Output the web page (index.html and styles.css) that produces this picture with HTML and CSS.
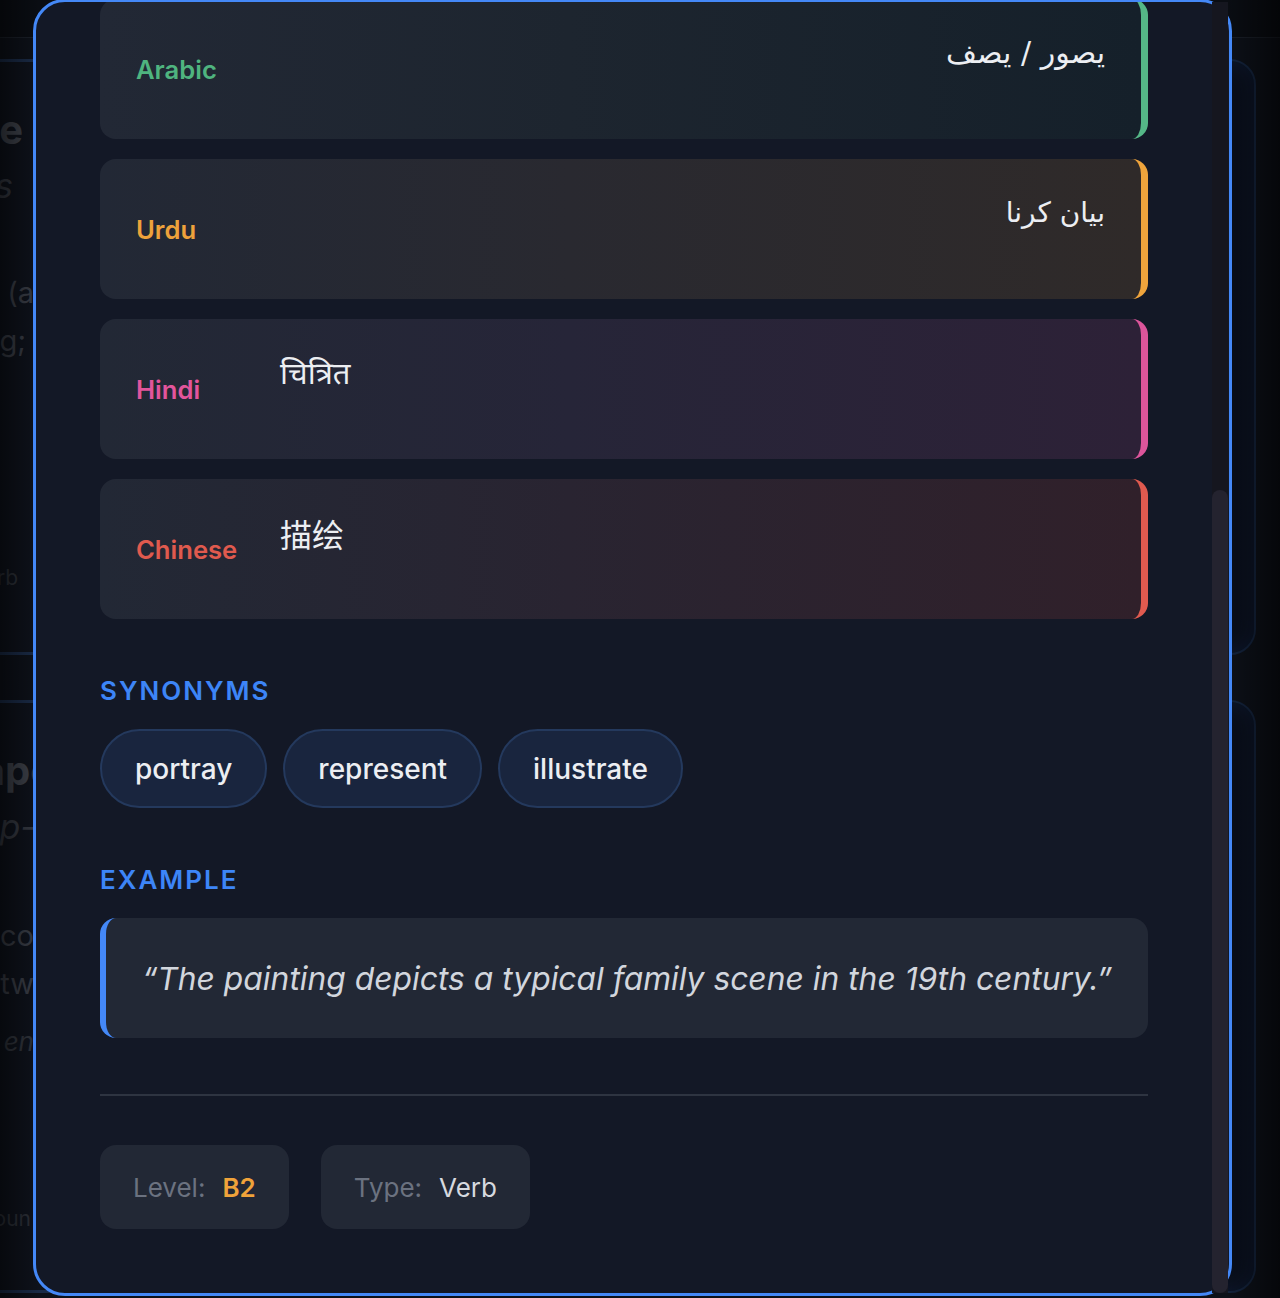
FILE: index.html
```html
<!DOCTYPE html>
<html lang="en">
<head>
<meta charset="utf-8">
<title>depict — word details</title>
<link rel="stylesheet" href="styles.css">
</head>
<body>
<div class="page">
  <header class="topbar"></header>
  <main class="grid">
    <article class="bgcard">
      <div class="bgtext">
        <div class="bg-title">Describe</div>
        <div class="bg-phon">/dɪˈskraɪbs</div>
        <div class="bg-def bg-def-first">To give an account in words of (a</div>
        <div class="bg-def bg-def-end">something;</div>
        <div class="bg-type">Verb</div>
      </div>
    </article>
    <article class="bgcard bgcard-right"></article>
    <article class="bgcard">
      <div class="bgtext">
        <div class="bg-title bg-title-2">Escape</div>
        <div class="bg-phon bg-phon-2">/ɪˈskɛp-</div>
        <div class="bg-def bg-def-first bg-def-2">A daring attempt to co</div>
        <div class="bg-def">break free between tw</div>
        <div class="bg-ex">“The prisoners’ daring escap en</div>
        <div class="bg-type bg-type-2">Noun</div>
      </div>
    </article>
    <article class="bgcard bgcard-right"></article>
  </main>
</div>
<div class="vignette"></div>

<div class="modal">
  <div class="scroll-view">
    <div class="modal-body">
      <section class="word-head">
        <h1 class="word-title">depict</h1>
        <div class="phonetic">/dɪˈpɪkt/</div>
        <p class="definition">To represent or show something in a picture or story; to describe someone or something in words, especially in a particular way.</p>
        <div class="tags"><span class="tag">verb</span><span class="tag">transitive</span></div>
      </section>

      <h2 class="section-title section-title-first">Translations</h2>
      <div class="tr-list">
        <div class="tr-card tr-es">
          <span class="tr-label">Spanish</span>
          <span class="tr-text">representar / describir</span>
        </div>
        <div class="tr-card tr-fr">
          <span class="tr-label">French</span>
          <span class="tr-text">dépeindre / représenter</span>
        </div>
        <div class="tr-card tr-ar">
          <span class="tr-label">Arabic</span>
          <span class="tr-text tr-rtl" dir="rtl" lang="ar">يصور / يصف</span>
        </div>
        <div class="tr-card tr-ur">
          <span class="tr-label">Urdu</span>
          <span class="tr-text tr-rtl tr-urdu" dir="rtl" lang="ur">بیان کرنا</span>
        </div>
        <div class="tr-card tr-hi">
          <span class="tr-label">Hindi</span>
          <span class="tr-text" lang="hi">चित्रित</span>
        </div>
        <div class="tr-card tr-zh">
          <span class="tr-label">Chinese</span>
          <span class="tr-text tr-cjk" lang="zh-CN">描绘</span>
        </div>
      </div>

      <h2 class="section-title">Synonyms</h2>
      <div class="chips">
        <span class="chip">portray</span>
        <span class="chip">represent</span>
        <span class="chip">illustrate</span>
      </div>

      <h2 class="section-title">Example</h2>
      <blockquote class="example">“The painting depicts a typical family scene in the 19th century.”</blockquote>

      <hr class="divider">

      <div class="meta">
        <div class="meta-item"><span class="meta-key">Level:</span><span class="meta-val meta-level">B2</span></div>
        <div class="meta-item"><span class="meta-key">Type:</span><span class="meta-val">Verb</span></div>
      </div>
    </div>
  </div>
  <div class="scrollbar"><div class="scrollbar-thumb"></div></div>
</div>
</body>
</html>
```

FILE: styles.css
```css
html, body {
  margin: 0;
  padding: 0;
}

body {
  width: 1280px;
  height: 1298px;
  overflow: hidden;
  background: #0d1119;
  font-family: "Inter", "DejaVu Sans", "Noto Sans", "Noto Sans CJK SC", sans-serif;
  position: relative;
}

/* ---------- background page (dimmed, behind the modal) ---------- */
.page {
  height: 1298px;
  overflow: hidden;
}

.topbar {
  height: 37px;
  background: #0a0d13;
  border-bottom: 1px solid #1a1f28;
}

.grid {
  display: grid;
  grid-template-columns: 1120px 612px;
  grid-template-rows: 596px 593px;
  column-gap: 24px;
  row-gap: 45px;
  margin-top: 21px;
  margin-left: -500px;
}

.bgcard {
  box-sizing: border-box;
  border: 3px solid #1a2b47;
  border-radius: 26px;
  background: #0e121b;
}

.bgcard-right {
  border-width: 2px;
  border-color: #14243e;
  background: #0a0f1b;
  box-shadow: inset 0 0 22px rgba(30, 70, 140, 0.22);
}

.bgtext {
  width: 531px;
  text-align: right;
  color: #363a43;
  white-space: nowrap;
}

.bg-title {
  font-size: 40px;
  line-height: 48px;
  font-weight: 700;
  color: #3c4049;
  margin-top: 44px;
  padding-right: 11px;
}

.bg-title-2 {
  padding-right: 0;
  margin-right: -20px;
}

.bg-phon {
  font-size: 34px;
  line-height: 40px;
  font-style: italic;
  margin-top: 12px;
  padding-right: 21px;
  color: #343841;
}

.bg-phon-2 {
  padding-right: 0;
  margin-right: -2px;
}

.bg-def {
  font-size: 29px;
  line-height: 48px;
  color: #383c45;
}

.bg-def-first {
  margin-top: 63px;
}

.bg-def-2 {
  margin-top: 65px;
}

.bg-def-end {
  padding-right: 8px;
}

.bg-ex {
  font-size: 26px;
  line-height: 36px;
  font-style: italic;
  margin-top: 16px;
  color: #30343c;
}

.bg-type {
  font-size: 21px;
  line-height: 28px;
  color: #2b2f37;
  margin-top: 199px;
  padding-right: 16px;
}

.bg-type-2 {
  margin-top: 145px;
  padding-right: 3px;
}

.vignette {
  position: absolute;
  inset: 0;
  pointer-events: none;
  background: linear-gradient(90deg,
    rgba(0, 0, 0, 0.5) 0,
    rgba(0, 0, 0, 0) 40px,
    rgba(0, 0, 0, 0) 1225px,
    rgba(0, 0, 0, 0.6) 1280px);
}

/* ---------- modal ---------- */
.modal {
  position: absolute;
  left: 33px;
  top: -1px;
  width: 1199px;
  height: 1297px;
  box-sizing: border-box;
  border: 3px solid #4488f7;
  border-radius: 32px;
  background: #131826;
}

.scroll-view {
  height: 100%;
  border-radius: 29px;
  overflow-y: auto;
  scrollbar-width: none;
  display: flex;
  flex-direction: column-reverse;
}

.scroll-view::-webkit-scrollbar {
  display: none;
}

/* drawn scrollbar, painted over the modal's right edge */
.scrollbar {
  position: absolute;
  top: 0;
  bottom: 0;
  right: 1px;
  width: 16px;
  background: #15161f;
  display: flex;
  flex-direction: column;
  justify-content: flex-end;
}

.scrollbar-thumb {
  height: 803px;
  border-radius: 8px;
  background: #24232f;
}

.modal-body {
  padding: 64px 81px 64px 64px;
  flex-shrink: 0;
}

/* scrolled-away header */
.word-head {
  margin: 0;
}

.word-title {
  margin: 0;
  font-size: 60px;
  line-height: 72px;
  font-weight: 700;
  color: #f3f4f6;
}

.phonetic {
  margin-top: 8px;
  font-size: 28px;
  line-height: 40px;
  font-style: italic;
  color: #9ca3af;
}

.definition {
  margin: 24px 0 0;
  font-size: 26px;
  line-height: 40px;
  color: #d1d5db;
  height: 80px;
  overflow: hidden;
}

.tags {
  margin-top: 24px;
  height: 40px;
  display: flex;
  gap: 12px;
}

.tag {
  display: flex;
  align-items: center;
  padding: 0 16px;
  border-radius: 20px;
  background: #1b2540;
  color: #93b4f5;
  font-size: 20px;
}

/* section headings */
.section-title {
  margin: 56px 0 22px;
  font-size: 26px;
  line-height: 32px;
  font-weight: 600;
  letter-spacing: 2px;
  text-transform: uppercase;
  color: #3d85f7;
}

.section-title-first {
  margin-bottom: 23px;
}

/* translation cards */
.tr-list {
  display: flex;
  flex-direction: column;
  gap: 20px;
}

.tr-card {
  height: 140px;
  box-sizing: border-box;
  display: flex;
  align-items: center;
  padding: 0 36px;
  border-radius: 16px;
  border-right: 7px solid #888;
  background: #222836;
}

.tr-label {
  width: 144px;
  flex-shrink: 0;
  font-size: 25.6px;
  font-weight: 600;
}

.tr-text {
  flex: 1;
  padding-bottom: 32px;
  font-size: 31px;
  line-height: 40px;
  color: #eceef2;
  font-family: "Inter", "Noto Sans", "DejaVu Sans", "Noto Sans CJK SC", sans-serif;
}

.tr-rtl {
  text-align: right;
  font-family: "DejaVu Sans", "Noto Sans", sans-serif;
  font-size: 30px;
}

.tr-urdu {
  font-size: 28px;
}

.tr-cjk {
  font-family: "Noto Sans CJK SC", sans-serif;
  font-size: 32px;
}

.tr-es { border-right-color: #f0c23b; background: linear-gradient(90deg, #222836, #2c2a27); }
.tr-es .tr-label { color: #f0c23b; }
.tr-fr { border-right-color: #4f8df5; background: linear-gradient(90deg, #222836, #1b2238); }
.tr-fr .tr-label { color: #4f8df5; }

.tr-ar { border-right-color: #55b787; background: linear-gradient(90deg, #222835 0%, #1d252f 45%, #15202a 100%); }
.tr-ar .tr-label { color: #4fb47f; }

.tr-ur { border-right-color: #efa43c; background: linear-gradient(90deg, #222835 0%, #292930 45%, #2f2a29 100%); }
.tr-ur .tr-label { color: #eea23b; }

.tr-hi { border-right-color: #dc559b; background: linear-gradient(90deg, #222835 0%, #262538 45%, #2d2137 100%); }
.tr-hi .tr-label { color: #e2559c; }

.tr-zh { border-right-color: #e05a4f; background: linear-gradient(90deg, #222835 0%, #292431 45%, #30202a 100%); }
.tr-zh .tr-label { color: #e05a4e; }

/* synonyms */
.chips {
  display: flex;
  gap: 16px;
}

.chip {
  box-sizing: border-box;
  height: 79px;
  display: flex;
  align-items: center;
  padding: 0 33px;
  border: 2px solid #24395d;
  border-radius: 40px;
  background: #19253e;
  color: #eceef2;
  font-size: 28px;
  font-weight: 500;
}

/* example */
.example {
  margin: 0;
  height: 120px;
  box-sizing: border-box;
  display: flex;
  align-items: center;
  padding: 0 24px 0 36px;
  border-left: 6px solid #4488f7;
  border-radius: 16px;
  background: #222835;
  color: #d2d6dd;
  font-size: 31.8px;
  font-style: italic;
  white-space: nowrap;
}

.divider {
  margin: 56px 0 0;
  height: 2px;
  border: 0;
  background: #2e3441;
}

/* meta badges */
.meta {
  margin-top: 49px;
  display: flex;
  gap: 32px;
}

.meta-item {
  height: 84px;
  box-sizing: border-box;
  display: flex;
  align-items: center;
  padding: 0 33px;
  border-radius: 16px;
  background: #222835;
  font-size: 26px;
}

.meta-key {
  color: #6b7280;
  margin-right: 17px;
}

.meta-val {
  color: #d6d9df;
}

.meta-level {
  color: #f0a33a;
  font-weight: 600;
}
```
